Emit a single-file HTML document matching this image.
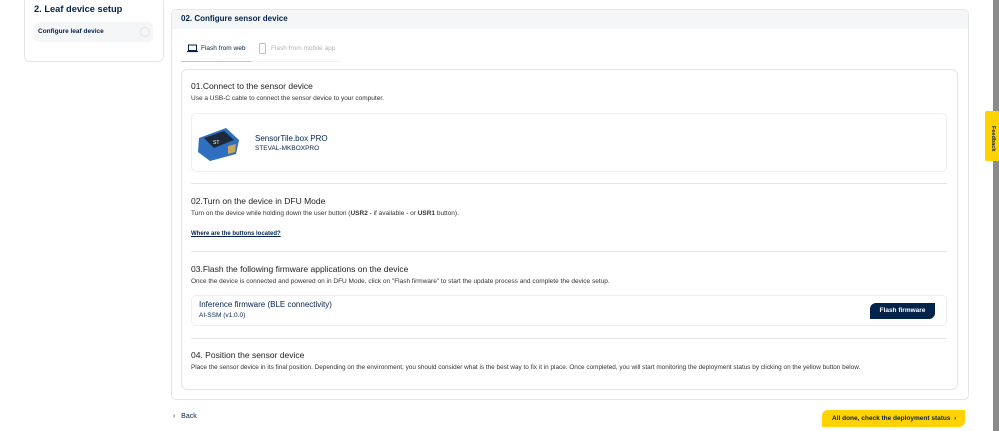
<!DOCTYPE html>
<html><head><style>
*{box-sizing:border-box;margin:0;padding:0}
body{width:999px;height:431px;background:#fff;font-family:"Liberation Sans",Arial,sans-serif;color:#03234b;position:relative;overflow:hidden}
.abs{position:absolute}
.t{color:#333;font-size:6.5px}
h4{font-weight:normal;font-size:8.5px;color:#222;position:absolute}
.sep{position:absolute;left:191px;width:756px;height:1px;background:#e6e6e6}
</style></head><body>
<div class="abs" style="left:24px;top:-5px;width:140px;height:67px;border:1px solid #e3e6ea;border-radius:6px"></div>
<div class="abs" style="left:34px;top:4px;font-size:9.3px;font-weight:bold;color:#03234b">2. Leaf device setup</div>
<div class="abs" style="left:34px;top:22px;width:119px;height:20px;background:#f4f6f8;border-radius:5px"></div>
<div class="abs" style="left:38px;top:28px;font-size:6.5px;font-weight:bold;color:#03234b">Configure leaf device</div>
<div class="abs" style="left:140px;top:27px;width:10px;height:10px;border:1px solid #dde1e5;border-radius:50%"></div>

<div class="abs" style="left:171px;top:9px;width:798px;height:391px;border:1px solid #e3e6ea;border-radius:5px"></div>
<div class="abs" style="left:172px;top:10px;width:796px;height:19px;background:#f4f6f8;border-radius:5px 5px 0 0"></div>
<div class="abs" style="left:181px;top:14px;font-size:8px;font-weight:bold;color:#03234b">02. Configure sensor device</div>
<div class="abs" style="left:181px;top:61px;width:160px;height:1px;background:#eef0f2"></div>
<div class="abs" style="left:181px;top:61px;width:70px;height:1px;background:#9fd0ef"></div>
<svg class="abs" style="left:187px;top:44px" width="11" height="9" viewBox="0 0 11 9"><rect x="1.5" y="1" width="8" height="5.5" fill="none" stroke="#03234b" stroke-width="1"/><path d="M0 7.5h11" stroke="#03234b" stroke-width="1.2"/></svg>
<div class="abs" style="left:201px;top:45px;font-size:6.5px;color:#03234b">Flash from web</div>
<svg class="abs" style="left:259px;top:43px" width="7" height="11" viewBox="0 0 7 11"><rect x="0.5" y="0.5" width="6" height="10" rx="1" fill="none" stroke="#b8bec6"/></svg>
<div class="abs" style="left:271px;top:45px;font-size:6.5px;color:#b0b6be">Flash from mobile app</div>

<div class="abs" style="left:181px;top:69px;width:777px;height:321px;border:1px solid #e3e6ea;border-radius:6px"></div>
<h4 style="left:191px;top:81px">01.Connect to the sensor device</h4>
<div class="abs t" style="left:191px;top:95px">Use a USB-C cable to connect the sensor device to your computer.</div>
<div class="abs" style="left:191px;top:113px;width:756px;height:59px;border:1px solid #eceef0;border-radius:5px"></div>
<svg class="abs" style="left:196px;top:124px" width="45" height="38" viewBox="0 0 45 38"><path d="M3 14 L30 4 L43 16 L40 30 L14 37 L2 28Z" fill="#2f6fbf"/><path d="M8 14 L28 7 L38 16 L18 24Z" fill="#1c2a3a"/><path d="M32 22 L40 20 L39 28 L32 30Z" fill="#c9a85a"/><text x="17" y="20" font-size="5" fill="#fff" font-family="Liberation Sans">ST</text></svg>
<div class="abs" style="left:255px;top:134px;font-size:8px;color:#03234b">SensorTile.box PRO</div>
<div class="abs" style="left:255px;top:145px;font-size:6.5px;color:#03234b">STEVAL-MKBOXPRO</div>
<div class="sep" style="top:183px"></div>
<h4 style="left:191px;top:196px">02.Turn on the device in DFU Mode</h4>
<div class="abs t" style="left:191px;top:210px">Turn on the device while holding down the user button (<b>USR2</b> - if available - or <b>USR1</b> button).</div>
<div class="abs" style="left:191px;top:231px;font-size:6px;font-weight:bold;text-decoration:underline;color:#03234b">Where are the buttons located?</div>
<div class="sep" style="top:251px"></div>
<h4 style="left:191px;top:264px">03.Flash the following firmware applications on the device</h4>
<div class="abs t" style="left:191px;top:278px">Once the device is connected and powered on in DFU Mode, click on "Flash firmware" to start the update process and complete the device setup.</div>
<div class="abs" style="left:191px;top:295px;width:756px;height:31px;border:1px solid #eceef0;border-radius:5px"></div>
<div class="abs" style="left:199px;top:300px;font-size:8px;color:#03234b">Inference firmware (BLE connectivity)</div>
<div class="abs" style="left:199px;top:312px;font-size:6.5px;color:#03234b">AI-SSM (v1.0.0)</div>
<div class="abs" style="left:870px;top:303px;width:65px;height:16px;background:#03234b;border-radius:6px 0 6px 0;color:#fff;font-size:6.5px;font-weight:bold;text-align:center;line-height:16px">Flash firmware</div>
<div class="sep" style="top:338px"></div>
<h4 style="left:191px;top:350px">04. Position the sensor device</h4>
<div class="abs t" style="left:191px;top:364px;font-size:6.4px">Place the sensor device in its final position. Depending on the environment, you should consider what is the best way to fix it in place. Once completed, you will start monitoring the deployment status by clicking on the yellow button below.</div>

<div class="abs" style="left:173px;top:413px;font-size:7px;color:#03234b">‹&nbsp;&nbsp;&nbsp;Back</div>
<div class="abs" style="left:822px;top:410px;width:143px;height:17px;background:#ffd200;border-radius:6px 0 6px 0;font-size:6.5px;font-weight:bold;color:#03234b;line-height:17px;padding-left:10px">All done, check the deployment status&nbsp;&nbsp;›</div>

<div class="abs" style="left:993px;top:0;width:6px;height:431px;background:#8a8a8a"></div>
<div class="abs" style="left:985px;top:111px;width:14px;height:50px;background:#ffd200;border-radius:2px 0 0 2px"></div>
<div class="abs" style="left:986px;top:130px;font-size:5.5px;font-weight:bold;color:#03234b;transform:rotate(90deg);transform-origin:center;width:14px;text-align:center;white-space:nowrap;line-height:6px">Feedback</div>
</body></html>
